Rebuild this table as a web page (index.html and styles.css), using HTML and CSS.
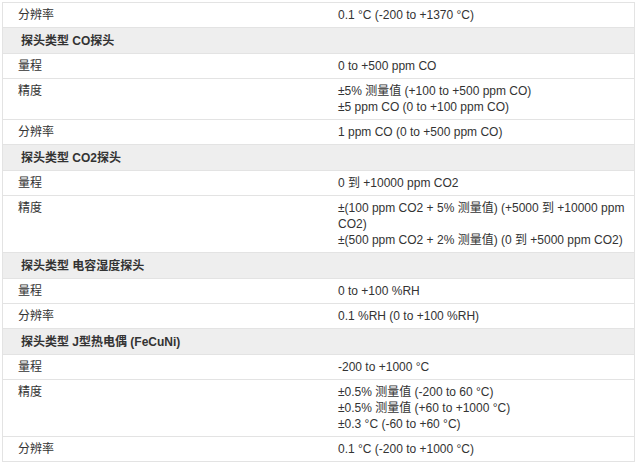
FILE: index.html
```html
<!DOCTYPE html>
<html lang="zh">
<head>
<meta charset="utf-8">
<link rel="stylesheet" href="styles.css">
</head>
<body>
<div class="spec">
  <div class="row"><div class="k">分辨率</div><div class="v">0.1 °C (-200 to +1370 °C)</div></div>
  <div class="head">探头类型 CO探头</div>
  <div class="row"><div class="k">量程</div><div class="v">0 to +500 ppm CO</div></div>
  <div class="row"><div class="k">精度</div><div class="v">±5% 测量值 (+100 to +500 ppm CO)<br>±5 ppm CO (0 to +100 ppm CO)</div></div>
  <div class="row"><div class="k">分辨率</div><div class="v">1 ppm CO (0 to +500 ppm CO)</div></div>
  <div class="head">探头类型 CO2探头</div>
  <div class="row"><div class="k">量程</div><div class="v">0 到 +10000 ppm CO2</div></div>
  <div class="row"><div class="k">精度</div><div class="v">±(100 ppm CO2 + 5% 测量值) (+5000 到 +10000 ppm CO2)<br>±(500 ppm CO2 + 2% 测量值) (0 到 +5000 ppm CO2)</div></div>
  <div class="head">探头类型 电容湿度探头</div>
  <div class="row"><div class="k">量程</div><div class="v">0 to +100 %RH</div></div>
  <div class="row"><div class="k">分辨率</div><div class="v">0.1 %RH (0 to +100 %RH)</div></div>
  <div class="head">探头类型 J型热电偶 (FeCuNi)</div>
  <div class="row"><div class="k">量程</div><div class="v">-200 to +1000 °C</div></div>
  <div class="row"><div class="k">精度</div><div class="v">±0.5% 测量值 (-200 to 60 °C)<br>±0.5% 测量值 (+60 to +1000 °C)<br>±0.3 °C (-60 to +60 °C)</div></div>
  <div class="row"><div class="k">分辨率</div><div class="v">0.1 °C (-200 to +1000 °C)</div></div>
</div>
</body>
</html>
```

FILE: styles.css
```css
html, body {
  margin: 0;
  padding: 0;
  background: #ffffff;
}
body {
  padding: 2px 1px 0 2px;
  font-family: "Liberation Sans", Arial, "Noto Sans CJK SC", sans-serif;
  font-size: 12px;
  line-height: 16px;
  color: #333333;
}
.spec {
  width: 631px;
  border: 1px solid #e3e3e3;
  border-bottom: none;
}
.row {
  display: grid;
  grid-template-columns: 320px 1fr;
  border-bottom: 1px solid #e3e3e3;
}
.k, .v {
  padding: 4px 6px 4px 15px;
}
.head {
  background: #eeeeee;
  font-weight: bold;
  padding: 5px 15px 4px 18px;
  border-bottom: 1px solid #e3e3e3;
}
```
